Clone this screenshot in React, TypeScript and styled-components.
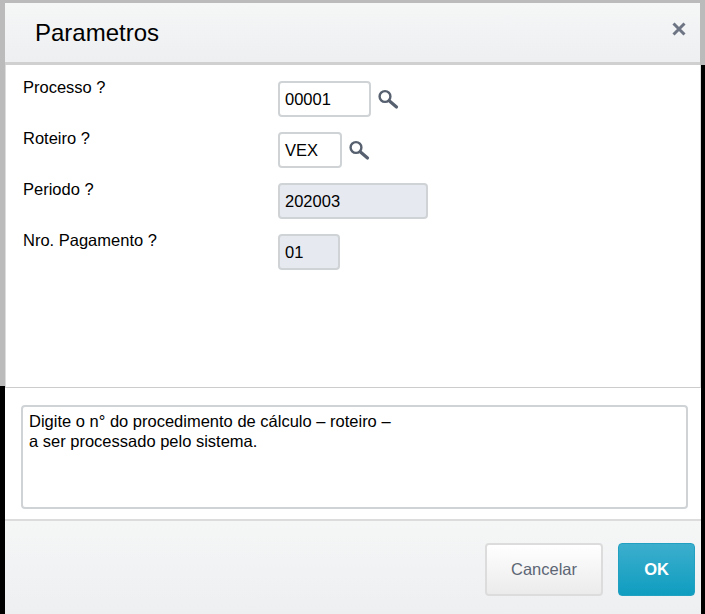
import React from 'react';
import styled, { createGlobalStyle } from 'styled-components';

const GlobalStyle = createGlobalStyle`
  html, body {
    margin: 0;
    padding: 0;
    background: #000;
  }
`;

interface Param {
  label: string;
  value: string;
  width: number;
  disabled?: boolean;
  lookup?: boolean;
}

const params: Param[] = [
  { label: 'Processo ?', value: '00001', width: 93, lookup: true },
  { label: 'Roteiro ?', value: 'VEX', width: 64, lookup: true },
  { label: 'Periodo ?', value: '202003', width: 150, disabled: true },
  { label: 'Nro. Pagamento ?', value: '01', width: 62, disabled: true },
];

const SearchIcon = () => (
  <SearchSvg width="22" height="22" viewBox="0 0 22 22" fill="none">
    <circle cx="8" cy="8.5" r="5.4" stroke="#56606f" strokeWidth="2.4" />
    <path d="M12.5 13l7 6" stroke="#56606f" strokeWidth="3.2" strokeLinecap="round" />
  </SearchSvg>
);

const App: React.FC = () => (
  <>
    <GlobalStyle />
    <Page>
      <Header>
        <Title>Parametros</Title>
        <CloseIcon width="16" height="16" viewBox="0 0 16 16">
          <path d="M2.5 2.5l11 11M13.5 2.5l-11 11" stroke="#6d7585" strokeWidth="3" />
        </CloseIcon>
      </Header>
      <Body>
        <Form>
          {params.map((p) => (
            <Row key={p.label}>
              <Label>{p.label}</Label>
              <Field>
                <Input $width={p.width} $disabled={p.disabled}>
                  {p.value}
                </Input>
                {p.lookup && <SearchIcon />}
              </Field>
            </Row>
          ))}
        </Form>
        <Help>
          <HelpBox>
            Digite o n° do procedimento de cálculo – roteiro –
            <br />
            a ser processado pelo sistema.
          </HelpBox>
        </Help>
      </Body>
      <Footer>
        <CancelButton>Cancelar</CancelButton>
        <OkButton>OK</OkButton>
      </Footer>
    </Page>
  </>
);

export default App;

const Page = styled.div`
  width: 705px;
  height: 614px;
  box-sizing: border-box;
  padding: 3px 4px 0 5px;
  display: flex;
  flex-direction: column;
  overflow: hidden;
  background:
    linear-gradient(#bbb, #bbb) 0 0 / 705px 65px no-repeat,
    linear-gradient(#bbb, #bbb) 0 0 / 5px 386px no-repeat,
    #000;
  font-family: 'Liberation Sans', Arial, sans-serif;
  color: #000;
`;

const Header = styled.div`
  height: 62px;
  flex: none;
  margin-right: 1px;
  box-sizing: border-box;
  padding: 0 13px 0 30px;
  display: flex;
  align-items: center;
  justify-content: space-between;
  background: linear-gradient(to bottom, #f5f6f6, #eeeff1);
  border-bottom: 3px solid #d0d0d0;
`;

const Title = styled.h1`
  margin: 0;
  font-size: 24px;
  font-weight: 400;
  line-height: 58px;
`;

const CloseIcon = styled.svg`
  display: block;
  margin-bottom: 8px;
`;

const Body = styled.div`
  height: 454px;
  flex: none;
  display: flex;
  flex-direction: column;
  background: #fff;
`;

const Form = styled.div`
  height: 323px;
  flex: none;
  box-sizing: border-box;
  padding: 16px 0 0 17px;
  display: flex;
  flex-direction: column;
  gap: 15px;
  border-left: 1px solid #ddd;
  border-right: 1px solid #ddd;
  border-bottom: 1px solid #ccc;
`;

const Row = styled.div`
  display: flex;
  height: 36px;
`;

const Label = styled.div`
  width: 255px;
  flex: none;
  font-size: 16.5px;
  line-height: 12px;
`;

const Field = styled.div`
  display: flex;
  align-items: flex-start;
  gap: 6px;
`;

const SearchSvg = styled.svg`
  display: block;
  margin-top: 7px;
`;

const Input = styled.div<{ $width: number; $disabled?: boolean }>`
  width: ${(p) => p.$width}px;
  height: 36px;
  box-sizing: border-box;
  padding: 0 5px;
  font-size: 16.5px;
  line-height: 32px;
  border: 2px solid #d0d3d6;
  border-radius: 4px;
  background: ${(p) => (p.$disabled ? '#e6e9f0' : '#fff')};
`;

const Help = styled.div`
  flex: 1;
  padding: 17px 13px 0 16px;
`;

const HelpBox = styled.div`
  height: 104px;
  box-sizing: border-box;
  padding: 4px 6px;
  font-size: 16.5px;
  line-height: 20px;
  border: 2px solid #d0d3d6;
  border-radius: 4px;
`;

const Footer = styled.div`
  flex: 1;
  box-sizing: border-box;
  padding: 4px 6px 0 0;
  display: flex;
  align-items: center;
  justify-content: flex-end;
  gap: 15px;
  background: linear-gradient(to bottom, #f5f6f6, #eeeff1);
  border-top: 2px solid #dcdcdc;
`;

const CancelButton = styled.div`
  width: 118px;
  height: 53px;
  box-sizing: border-box;
  display: flex;
  align-items: center;
  justify-content: center;
  font-size: 16.5px;
  color: #5d6675;
  border: 2px solid #dcdcdc;
  border-radius: 4px;
  background: linear-gradient(to bottom, #fff, #ebebeb);
`;

const OkButton = styled.div`
  width: 77px;
  height: 53px;
  box-sizing: border-box;
  display: flex;
  align-items: center;
  justify-content: center;
  font-size: 16.5px;
  font-weight: 700;
  color: #fff;
  border: 1px solid #22a0c2;
  border-radius: 4px;
  background: linear-gradient(to bottom, #3caecd, #0f9dc0);
`;
